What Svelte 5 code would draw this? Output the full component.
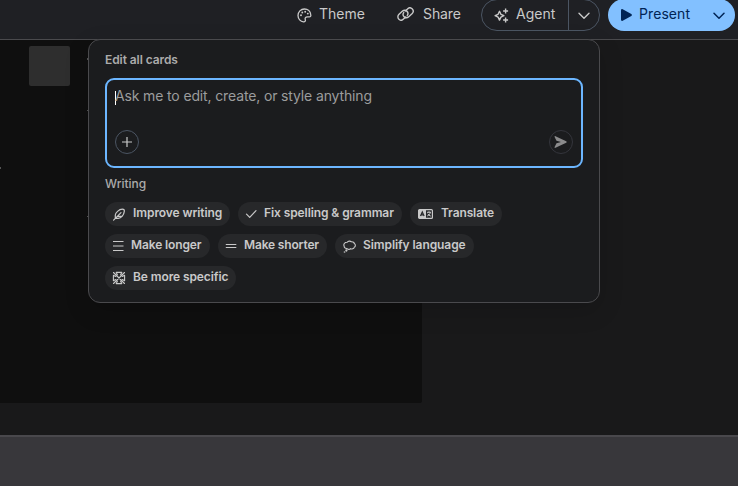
<script>
  const rows = [
    [
      { icon: 'feather', label: 'Improve writing', width: 125, text: 28, track: -0.08 },
      { icon: 'check', label: 'Fix spelling & grammar', width: 164, text: 26, track: -0.09 },
      { icon: 'translate', label: 'Translate', width: 92, text: 31, track: -0.12 }
    ],
    [
      { icon: 'longer', label: 'Make longer', width: 105, text: 26, track: -0.12 },
      { icon: 'shorter', label: 'Make shorter', width: 109, text: 26, track: -0.16 },
      { icon: 'cloud', label: 'Simplify language', width: 139, text: 28, track: -0.08 }
    ],
    [{ icon: 'target', label: 'Be more specific', width: 131, text: 28, track: -0.1 }]
  ];
</script>

<div class="app">
  <header>
    <div class="item theme">
      <svg width="15" height="15" viewBox="0 0 15 15" fill="none" stroke="currentColor" stroke-width="1.3">
        <path d="M7.400 1C3.800 1 1 3.800 1 7.500c0 3.400 2.500 6.100 5.500 6.300 1.700.1 2.200-.9 1.800-2.100-.6-1.700.3-2.900 2.100-2.900h1.800c1.300 0 1.800-.6 1.600-1.900C13.500 3.300 10.800 1 7.400 1Z" />
        <g fill="currentColor" stroke="none"><circle cx="4" cy="7.300" r=".95" /><circle cx="5.300" cy="4.500" r=".95" /><circle cx="8.200" cy="3.700" r=".95" /><circle cx="10.800" cy="5.600" r=".95" /></g>
      </svg>
      <span>Theme</span>
    </div>
    <div class="item share">
      <svg width="17" height="14" viewBox="0 0 17 14" fill="none" stroke="currentColor" stroke-width="1.400" stroke-linecap="round">
        <path d="M8.800 9.900 6.500 12.100a3.250 3.250 0 0 1-4.700-4.500L5.500 4.100a3.250 3.250 0 0 1 4.800 4.300" />
        <path d="M8.200 4.100 10.500 1.900a3.250 3.250 0 0 1 4.700 4.500L11.500 9.900a3.250 3.250 0 0 1-4.800-4.300" />
      </svg>
      <span>Share</span>
    </div>
    <div class="agent">
      <div class="main">
        <svg width="15" height="15" viewBox="0 0 15 15" fill="none" stroke="currentColor">
          <path stroke-width="1.400" stroke-linejoin="round" d="M5.500 3.300 6.900 6.300 9.900 7.700 6.900 9.100 5.500 12.100 4.100 9.100 1.100 7.700 4.100 6.300Z" />
          <path stroke-width="1.400" d="M11.600.5v5M9.100 3h5M11.600 9.500v5M9.100 12h5" />
        </svg>
        <span>Agent</span>
      </div>
      <div class="drop">
        <svg width="12" height="8" viewBox="0 0 12 8" fill="none" stroke="currentColor" stroke-width="1.400" stroke-linecap="round" stroke-linejoin="round"><path d="m1 1.300 5 5 5-5" /></svg>
      </div>
    </div>
    <div class="present">
      <svg width="11" height="12" viewBox="0 0 11 12" fill="currentColor"><path d="M0 1.200C0 .1.800-.2 1.700.3L10.300 5.100c.8.500.8 1.300 0 1.800L1.700 11.700C.8 12.200 0 11.900 0 10.800Z" /></svg>
      <span>Present</span>
      <svg width="12" height="8" viewBox="0 0 12 8" fill="none" stroke="currentColor" stroke-width="1.500" stroke-linecap="round" stroke-linejoin="round"><path d="m1 1.300 5 5 5-5" /></svg>
    </div>
  </header>

  <main>
    <div class="slide">
      <div class="thumb"></div>
      <i class="speck s1"></i><i class="speck s2"></i><i class="speck s3"></i><i class="speck s4"></i>
    </div>
    <section class="panel">
      <h2>Edit all cards</h2>
      <div class="prompt">
        <div class="placeholder"><i class="caret"></i><span>Ask me to edit, create, or style anything</span></div>
        <div class="actions">
          <div class="round">
            <svg width="10" height="10" viewBox="0 0 10 10" stroke="currentColor" stroke-width="1.200"><path d="M5 0v10M0 5h10" /></svg>
          </div>
          <div class="round send">
            <svg width="13" height="12" viewBox="0 0 13 12" fill="currentColor"><path d="M.6.9C.3.300.9-.1 1.500.2L12.200 5.300c.6.300.6 1.100 0 1.400L1.500 11.800c-.6.300-1.200-.1-.9-.7L2.500 7.200 7 6 2.500 4.800Z" /></svg>
          </div>
        </div>
      </div>
      <h3>Writing</h3>
      <div class="rows">
        {#each rows as row}
          <div class="row">
            {#each row as chip}
              <div class="chip" style="width:{chip.width}px">
                <span class="glyph" style="width:{chip.text - 7}px">
                  {#if chip.icon === 'feather'}
                    <svg width="13" height="13" viewBox="0 0 13 13" fill="none" stroke="currentColor" stroke-width="1.200" stroke-linecap="round" stroke-linejoin="round"><path d="M1.600 12.100 9 4.600M3.300 10.300V7C3.300 5 7 1.200 10.300 1.200c1.700 0 2.200.7 2 2.200C11.900 7 9.300 10.300 6.200 10.300ZM5.200 8.400h4.200" /></svg>
                  {:else if chip.icon === 'check'}
                    <svg width="12" height="12" viewBox="0 0 12 12" fill="none" stroke="currentColor" stroke-width="1.200" stroke-linecap="round" stroke-linejoin="round"><path d="m1.500 6.200 3.200 3.200L11 2.700" /></svg>
                  {:else if chip.icon === 'translate'}
                    <svg class="wide" width="15" height="12" viewBox="0 0 15 12" fill="none" stroke="currentColor" stroke-width="1.200">
                      <rect x=".6" y="1.600" width="13.800" height="8.800" rx="1" /><path fill="currentColor" stroke="none" d="M1 1.500h7v9H1Z" />
                      <path stroke="#27282a" d="m2.500 8 1.800-4 1.800 4M3.200 6.800h2.200" /><path stroke-width="1" d="M9 4.300h4M11 3.300v1M12.300 4.500C12 6.300 10.700 7.500 9.200 8M9.800 5.800c.6 1.100 1.700 1.900 3 2.300" />
                    </svg>
                  {:else if chip.icon === 'longer'}
                    <svg width="12" height="12" viewBox="0 0 12 12" stroke="currentColor" stroke-width="1.100"><path d="M1 1.500h10.500M1 6h10.500M1 10.500h10.500" /></svg>
                  {:else if chip.icon === 'shorter'}
                    <svg width="12" height="12" viewBox="0 0 12 12" stroke="currentColor" stroke-width="1.100"><path d="M.8 4.500h10.500M.8 7.500h10.500" /></svg>
                  {:else if chip.icon === 'cloud'}
                    <svg class="wide" width="13" height="13" viewBox="0 0 13 13" fill="none" stroke="currentColor" stroke-width="1.100"><path d="M4.200 2.300C5.100.9 7.300.7 8.400 1.800c1.700-.2 2.900.6 2.900 1.800 1.400.8 1.500 3-.1 3.700-.4 1.500-2.500 2-3.600 1.400-1 1.100-3 .8-3.600-.2C2.300 8.700 1 7.600 1.200 6.200.2 4.400 1.600 2.200 4.200 2.300Z" /><circle cx="3.400" cy="10.500" r=".6" /><circle cx="1.500" cy="12" r=".3" /></svg>
                  {:else}
                    <svg width="14" height="14" viewBox="0 0 14 14" fill="none" stroke="currentColor" stroke-width="1.100" stroke-linecap="round" stroke-linejoin="round"><path d="M1.500 1.500 12.500 12.500M12.500 1.500 1.500 12.500M4.200 1.400h5.600L8.600 3.700M4.200 1.400 5.400 3.700M4.200 12.600h5.600L8.600 10.300M4.200 12.600 5.400 10.300M1.400 4.200v5.600L3.700 8.600M1.400 4.200 3.700 5.400M12.600 4.200v5.600L10.300 8.600M12.600 4.200 10.300 5.400" /></svg>
                  {/if}
                </span>
                <span class="label" style="letter-spacing:{chip.track}px">{chip.label}</span>
              </div>
            {/each}
          </div>
        {/each}
      </div>
    </section>
  </main>
  <footer></footer>
</div>

<style>
  .app { width: 738px; height: 486px; overflow: hidden; display: flex; flex-direction: column; background: #19191a; font-family: Inter, "Liberation Sans", sans-serif; color: #c9c9c9; }
  svg { display: block; flex: none; }
  header { box-sizing: border-box; height: 40px; flex: none; display: flex; align-items: flex-start; background: #1f2024; border-bottom: 1px solid #4a4a4d; font-size: 14px; line-height: 28px; white-space: nowrap; }
  .item { display: flex; height: 28px; align-items: center; }
  .theme { margin-left: 297px; width: 100px; gap: 7px; }
  .share { width: 84px; gap: 9px; }
  .share span { letter-spacing: -.1px; }
  .theme svg { margin-top: 2px; }
  .share svg { margin-top: -1px; }
  .agent { box-sizing: border-box; width: 119px; height: 32px; margin-top: -1px; border: 1px solid #4b5563; border-radius: 16px; display: flex; }
  .agent .main { width: 86px; display: flex; align-items: center; padding-left: 12px; gap: 7px; box-sizing: border-box; }
  .agent .main span { margin-top: -2px; }
  .drop { flex: 1; border-left: 1px solid #4b5563; display: flex; align-items: center; padding: 2px 0 0 9px; }
  .present { box-sizing: border-box; width: 127px; height: 32px; margin: -1px 0 0 8px; border-radius: 16px; background: #82c0ff; color: #002455; display: flex; align-items: center; padding-left: 13px; }
  .present span { margin: -2px 0 0 7px; width: 74px; letter-spacing: .08px; }
  .present svg:last-child { margin-top: 1px; }
  main { position: relative; height: 395px; flex: none; }
  .slide { position: relative; box-sizing: border-box; width: 422px; height: 363px; padding: 6px 0 0 29px; background: #0f0f0f; border-bottom-right-radius: 2px; }
  .thumb { width: 41px; height: 40px; background: #2e2e2e; border-radius: 2px; }
  .speck { position: absolute; width: 1px; height: 1px; left: 87px; background: #555; }
  .s1 { top: 18px; height: 2px; } .s2 { top: 70px; } .s3 { top: 176px; } .s4 { left: 0; top: 127px; height: 2px; }
  .panel { position: absolute; left: 88px; top: -1px; box-sizing: border-box; width: 512px; height: 264px; padding: 0 16px; border: 1px solid #4a4a4d; border-radius: 12px; background: #1b1c1e; box-shadow: 0 8px 24px rgba(0, 0, 0, .15); }
  h2, h3 { margin: 0; font-size: 12px; font-weight: 600; line-height: 16px; color: #ababab; letter-spacing: -.08px; }
  h2 { margin-top: 12px; }
  h3 { margin-top: 8px; font-weight: 500; letter-spacing: 0; }
  .prompt { box-sizing: border-box; width: 478px; height: 90px; margin-top: 10px; border: 2px solid #6cb6ff; border-radius: 9px; padding: 6px 8px 0; display: flex; flex-direction: column; }
  .placeholder { height: 20px; display: flex; align-items: center; font-size: 14px; line-height: 20px; letter-spacing: -.14px; color: #9c9c9d; white-space: nowrap; }
  .caret { width: 1px; height: 14px; margin: 4px -1px 0 0; background: #fff; }
  .actions { display: flex; justify-content: space-between; margin-top: 24px; }
  .round { box-sizing: border-box; width: 24px; height: 24px; border: 1px solid #4b5563; border-radius: 50%; display: flex; align-items: center; justify-content: center; }
  .send { border-color: #34353c; color: #8b8b8c; }
  .send svg { margin-left: -1px; }
  .rows { display: flex; flex-direction: column; gap: 8px; margin-top: 10px; }
  .row { display: flex; gap: 8px; }
  .chip { box-sizing: border-box; height: 24px; border-radius: 12px; background: #27282a; padding-left: 7px; display: flex; align-items: center; font-size: 12px; font-weight: 600; line-height: 16px; white-space: nowrap; }
  .glyph { flex: none; }
  .glyph .wide { margin-left: 1px; }
  .label { margin-top: -2px; }
  footer { flex: 1; border-top: 2px solid #49484c; background: #38373b; }
</style>
